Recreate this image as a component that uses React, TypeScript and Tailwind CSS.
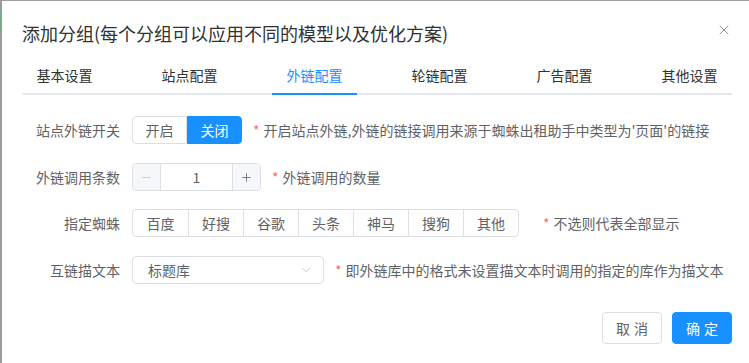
import React from 'react';
import { X, Minus, Plus, ChevronDown } from 'lucide-react';

const tabs = ['基本设置', '站点配置', '外链配置', '轮链配置', '广告配置', '其他设置'];
const spiders = ['百度', '好搜', '谷歌', '头条', '神马', '搜狗', '其他'];

const font = { fontFamily: '"Noto Sans CJK SC", "Noto Sans", sans-serif' };

const Note: React.FC<{ text: string; className?: string }> = ({ text, className }) => (
  <div className={`flex items-center text-[14px] text-[#606266] ${className ?? 'ml-[11px]'}`}>
    <span className="text-[#f56c6c] mr-[4px]">*</span>
    <span>{text}</span>
  </div>
);

const FormRow: React.FC<{ label: string; className?: string; children: React.ReactNode }> = ({ label, className, children }) => (
  <div className={`flex items-center h-[28px] ${className ?? ''}`}>
    <div className="w-[110px] shrink-0 pr-[12px] text-right text-[14px] text-[#606266]">{label}</div>
    {children}
  </div>
);

const App: React.FC = () => {
  const active = 2;

  return (
    <div className="w-[749px] h-[363px] overflow-hidden bg-[#9c9c9c] relative" style={font}>
      {/* bit of the page behind the dialog */}
      <div className="absolute left-0 top-[10px] w-[2px] h-[22px] bg-[#7fa88a]" />

      <div className="ml-[2px] mt-[1px] w-[750px] h-[400px] bg-white flex flex-col">
        {/* Header */}
        <div className="relative pt-[20px] px-[20px] pb-[10px]">
          <div className="text-[18px] leading-[24px] text-[#303133]">
            添加分组(每个分组可以应用不同的模型以及优化方案)
          </div>
          <button className="absolute right-[20px] top-[21px] text-[#909399]">
            <X size={16} strokeWidth={1.5} />
          </button>
        </div>

        {/* Tabs */}
        <div className="px-[20px]">
          <div className="relative flex justify-between h-[40px] border-b-2 border-[#e4e7ed]">
            {tabs.map((t, i) => (
              <div
                key={t}
                className={`relative w-[85px] text-center text-[14px] leading-[40px] ${
                  i === active ? 'text-[#1890ff]' : 'text-[#303133]'
                }`}
              >
                {t}
                {i === active && <div className="absolute left-0 right-0 -bottom-[2px] h-[2px] bg-[#1890ff]" />}
              </div>
            ))}
          </div>
        </div>

        {/* Form */}
        <div className="px-[20px] pt-[21px]">
          <FormRow label="站点外链开关">
            <div className="flex h-[28px] text-[14px]">
              <div className="w-[55px] flex items-center justify-center border border-[#dcdfe6] rounded-l-[4px] text-[#606266]">开启</div>
              <div className="w-[55px] flex items-center justify-center bg-[#1890ff] border border-[#1890ff] rounded-r-[4px] text-white">关闭</div>
            </div>
            <Note text="开启站点外链,外链的链接调用来源于蜘蛛出租助手中类型为'页面'的链接" />
          </FormRow>

          <FormRow label="外链调用条数" className="mt-[19px]">
            <div className="flex h-[28px] w-[129px] border border-[#dcdfe6] rounded-[4px] overflow-hidden">
              <div className="w-[28px] flex items-center justify-center bg-[#f5f7fa] border-r border-[#dcdfe6] text-[#c0c4cc]">
                <Minus size={13} strokeWidth={1.5} />
              </div>
              <div className="flex-1 flex items-center justify-center text-[14px] text-[#606266]">1</div>
              <div className="w-[28px] flex items-center justify-center bg-[#f5f7fa] border-l border-[#dcdfe6] text-[#606266]">
                <Plus size={13} strokeWidth={1.5} />
              </div>
            </div>
            <Note text="外链调用的数量" />
          </FormRow>

          <FormRow label="指定蜘蛛" className="mt-[18px]">
            <div className="flex h-[28px] text-[14px] text-[#606266] border border-[#dcdfe6] rounded-[4px]">
              {spiders.map((s, i) => (
                <div
                  key={s}
                  className={`w-[55px] flex items-center justify-center ${i > 0 ? 'border-l border-[#dcdfe6]' : ''}`}
                >
                  {s}
                </div>
              ))}
            </div>
            <Note text="不选则代表全部显示" className="ml-[24px]" />
          </FormRow>

          <FormRow label="互链描文本" className="mt-[19px]">
            <div className="flex items-center justify-between h-[28px] w-[192px] border border-[#dcdfe6] rounded-[4px] pl-[15px] pr-[10px] text-[14px] text-[#606266]">
              <span>标题库</span>
              <ChevronDown size={14} strokeWidth={1.5} className="text-[#c0c4cc]" />
            </div>
            <Note text="即外链库中的格式未设置描文本时调用的指定的库作为描文本" />
          </FormRow>
        </div>

        {/* Footer */}
        <div className="flex justify-end gap-[10px] px-[20px] mt-[28px]">
          <button className="w-[60px] h-[32px] border border-[#dcdfe6] rounded-[4px] text-[14px] text-[#606266] tracking-[4px] pl-[4px] bg-white">
            取消
          </button>
          <button className="w-[60px] h-[32px] border border-[#1890ff] rounded-[4px] text-[14px] text-white tracking-[4px] pl-[4px] bg-[#1890ff]">
            确定
          </button>
        </div>
      </div>
    </div>
  );
};

export default App;
